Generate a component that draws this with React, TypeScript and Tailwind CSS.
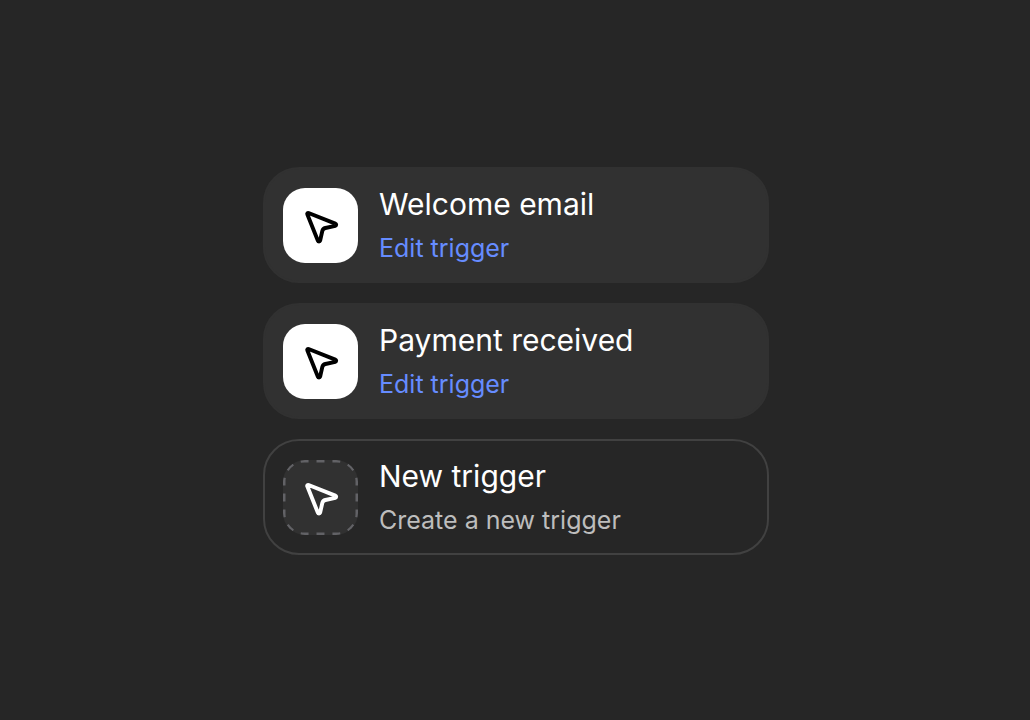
import clsx from "clsx";

type Trigger = {
  title: string;
  action: string;
  isNew?: boolean;
};

const triggers: Trigger[] = [
  { title: "Welcome email", action: "Edit trigger" },
  { title: "Payment received", action: "Edit trigger" },
  { title: "New trigger", action: "Create a new trigger", isNew: true },
];

function TriggerIcon({ isNew }: { isNew?: boolean }) {
  return (
    <svg
      viewBox="0 0 75 75"
      fill="none"
      aria-hidden="true"
      className={clsx(
        "size-[75px] shrink-0 rounded-[22px]",
        isNew ? "bg-[#313131] text-white" : "bg-white text-black"
      )}
    >
      {isNew && (
        <path
          d="M37.5 1.25H53.75A20 20 0 0 1 73.75 21.25V53.75A20 20 0 0 1 53.75 73.75H21.25A20 20 0 0 1 1.25 53.75V21.25A20 20 0 0 1 21.25 1.25Z"
          stroke="#626266"
          strokeWidth="2.5"
          pathLength={16}
          strokeDasharray="0.5 0.5"
          strokeDashoffset="0.25"
        />
      )}
      {/* Cursor */}
      <path
        d="M24.3 26.3C23.9 25.3 24.7 24.7 25.6 25L52.3 35.6C53.5 36.1 53.5 37.4 52.3 37.8L42.4 40C40.8 40.4 39.7 41.5 39.3 43L37.1 52.8C36.8 53.8 35.3 53.8 34.9 52.8Z"
        stroke="currentColor"
        strokeWidth="3.9"
        strokeLinejoin="round"
      />
    </svg>
  );
}

export default function App() {
  return (
    <main className="flex min-h-screen items-center justify-center bg-[#262626] pt-0.5 pl-0.5 font-['Inter',sans-serif]">
      <ul className="flex w-full max-w-[506px] flex-col gap-5">
        {triggers.map((trigger) => (
          <li
            key={trigger.title}
            className={clsx(
              "flex items-center gap-[21px] rounded-[36px] border-2 px-[18px] py-[15px]",
              trigger.isNew
                ? "border-[#414141]"
                : "border-[#313131] bg-[#313131]"
            )}
          >
            <TriggerIcon isNew={trigger.isNew} />
            <div className="flex flex-col items-start gap-1.5">
              <h2 className="text-[30px] leading-10 text-white">
                {trigger.title}
              </h2>
              <a
                href="#"
                className={clsx(
                  "text-[25px] leading-9",
                  trigger.isNew ? "text-[#bdbdbd]" : "text-[#668cff]"
                )}
              >
                {trigger.action}
              </a>
            </div>
          </li>
        ))}
      </ul>
    </main>
  );
}
